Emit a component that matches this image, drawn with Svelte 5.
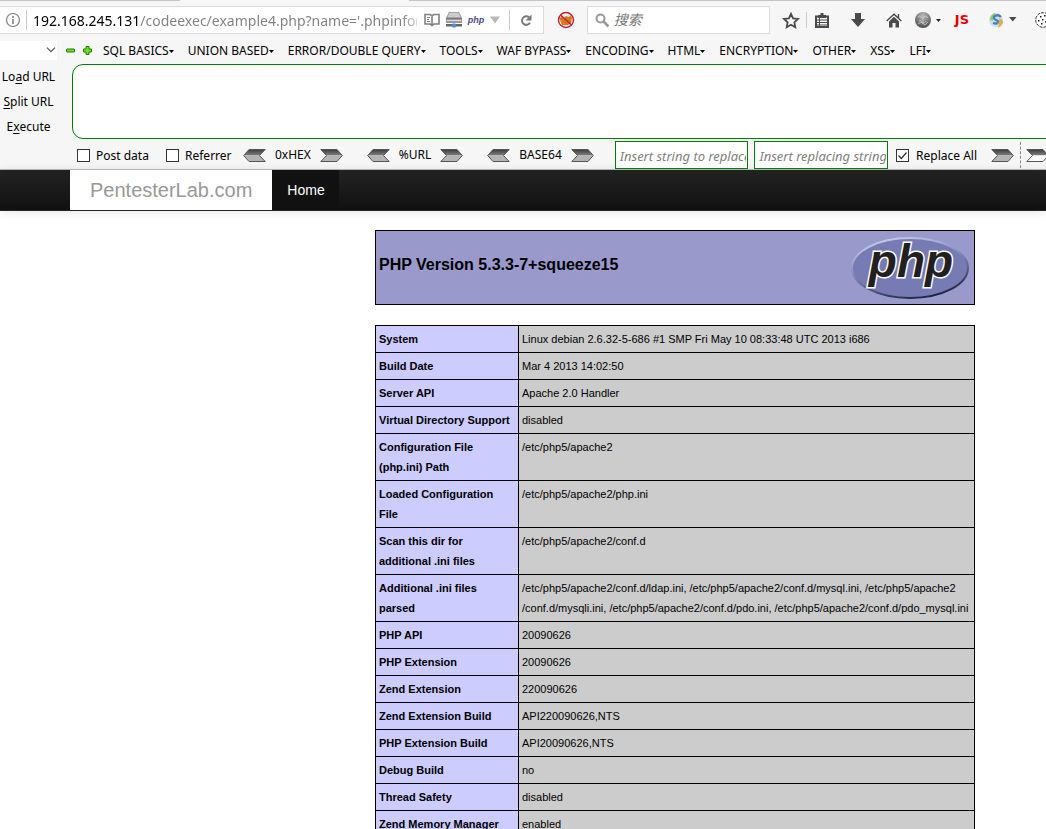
<script>
  const menus = ['SQL BASICS', 'UNION BASED', 'ERROR/DOUBLE QUERY', 'TOOLS', 'WAF BYPASS', 'ENCODING', 'HTML', 'ENCRYPTION', 'OTHER', 'XSS', 'LFI'];
  const encoders = ['0xHEX', '%URL', 'BASE64'];
  const rows = [
    ['System', ['Linux debian 2.6.32-5-686 #1 SMP Fri May 10 08:33:48 UTC 2013 i686']],
    ['Build Date', ['Mar 4 2013 14:02:50']],
    ['Server API', ['Apache 2.0 Handler']],
    ['Virtual Directory Support', ['disabled']],
    ['Configuration File (php.ini) Path', ['/etc/php5/apache2']],
    ['Loaded Configuration File', ['/etc/php5/apache2/php.ini']],
    ['Scan this dir for additional .ini files', ['/etc/php5/apache2/conf.d']],
    ['Additional .ini files parsed', [
      '/etc/php5/apache2/conf.d/ldap.ini, /etc/php5/apache2/conf.d/mysql.ini, /etc/php5/apache2',
      '/conf.d/mysqli.ini, /etc/php5/apache2/conf.d/pdo.ini, /etc/php5/apache2/conf.d/pdo_mysql.ini'
    ]],
    ['PHP API', ['20090626']],
    ['PHP Extension', ['20090626']],
    ['Zend Extension', ['220090626']],
    ['Zend Extension Build', ['API220090626,NTS']],
    ['PHP Extension Build', ['API20090626,NTS']],
    ['Debug Build', ['no']],
    ['Thread Safety', ['disabled']],
    ['Zend Memory Manager', ['enabled']]
  ];
</script>

{#snippet arrow(dir, hollow)}
  <svg class="arrow" class:left={dir === 'left'} width="23" height="13" viewBox="0 0 23 13" aria-hidden="true">
    <path d="M.8 .5H17L22.300 6.500H6.500z" fill="url(#steel)" />
    <path d="M6.500 6.500H22.300L17 12.500H.8z" fill={hollow ? '#fff' : '#b4b4b4'} />
    <path d="M.8 .5H17L22.300 6.500 17 12.500H.8L6.500 6.500z" fill="none" stroke="#555" />
  </svg>
{/snippet}

<svg class="defs" width="0" height="0" aria-hidden="true">
  <defs>
    <linearGradient id="steel" x1="0" y1="0" x2="0" y2="1"><stop offset="0" stop-color="#3c3c3c" /><stop offset="1" stop-color="#808080" /></linearGradient>
  </defs>
</svg>

<header class="browser">
  <div class="tabs"><i></i><b></b></div>
  <div class="toolbar">
    <div class="address">
      <button class="info" aria-label="Site information">
        <svg width="16" height="16" viewBox="0 0 16 16"><circle cx="8" cy="8" r="6.500" fill="none" stroke="#808080" stroke-width="1.200" /><path d="M7.200 4h1.600v2H7.200zM7.200 7h1.600v5H7.200z" fill="#808080" /></svg>
      </button>
      <input class="url" aria-label="Address" value="192.168.245.131/codeexec/example4.php?name='.phpinfo().'" />
      <div class="page-actions">
        <button aria-label="Reader view"><svg width="16" height="14" viewBox="0 0 16 14"><path d="M1 1.500h5l2 1.200 2-1.200h5v9.500h-5L8 12.500 6 11H1zM8 3v9" fill="none" stroke="#808080" stroke-width="1.600" /><path d="M3 4.500h3M3 6.500h2M3 8.500h3" stroke="#808080" /></svg></button>
        <button aria-label="Server"><svg width="16" height="16" viewBox="0 0 16 16"><path d="M3 0h10l3 6v5H0V6z" fill="#999" /><path d="M3.500.8h9l2 4.500h-13z" fill="#ccc" /><path d="M0 6h16v1H0z" fill="#777" /><path d="M1 8h14v1H1z" fill="#ddd" /><path d="M0 12h16v2.500H0z" fill="#666" /><rect x="6" y="11.500" width="4" height="4" rx="1" fill="#4d8ce0" /></svg></button>
        <button class="php-badge">php</button>
        <button aria-label="History"><svg width="10" height="8" viewBox="0 0 10 8"><path d="M0 .5h10L5 7.500z" fill="#b8b8b8" /></svg></button>
      </div>
      <button class="reload" aria-label="Reload"><svg width="13" height="13" viewBox="0 0 13 13"><path d="M9 3.200A4.300 4.300 0 1 0 10 8.800" fill="none" stroke="#7b7b7b" stroke-width="2" /><path d="M11.500 .5v6h-6z" fill="#7b7b7b" /></svg></button>
    </div>
    <button class="blocker" aria-label="Blocker"><svg width="18" height="18" viewBox="0 0 18 18"><path d="M3 9q-1-3 2-3l2 1 2-2 3 1 2-2 1 3-1 5-3 2H5z" fill="#d97a18" /><circle cx="9" cy="9" r="7.500" fill="none" stroke="#c81e2b" stroke-width="1.400" /><path d="M3.500 4l11 10" stroke="#c81e2b" stroke-width="1.500" /></svg></button>
    <label class="search">
      <svg width="15" height="15" viewBox="0 0 15 15"><circle cx="5.500" cy="5.500" r="4" fill="none" stroke="#999" stroke-width="2" /><path d="M8.500 8.500l5 5" stroke="#999" stroke-width="2.500" /></svg>
      <input aria-label="Search" placeholder="搜索" />
    </label>
    <div class="actions">
      <button aria-label="Bookmark"><svg width="18" height="17" viewBox="0 0 18 17"><path d="M9 1.800l2.100 4.500 4.900.6-3.600 3.400.9 4.900L9 12.800l-4.300 2.400.9-4.900L2 6.900l4.900-.6z" fill="none" stroke="#4a4a4a" stroke-width="1.800" /></svg></button>
      <span class="rule"></span>
      <button aria-label="Bookmarks list"><svg width="14" height="15" viewBox="0 0 14 15"><path d="M1 3.500h12v10.500H1z" fill="#f6f6f6" stroke="#4a4a4a" stroke-width="2" /><path d="M3 2h8v3H3zM5.500 0h3v3h-3z" fill="#4a4a4a" /><path d="M2 7h10M2 9.500h10M2 12h10M4.500 5v8" stroke="#4a4a4a" /></svg></button>
      <button class="download" aria-label="Downloads"><svg width="14" height="14" viewBox="0 0 14 14"><path d="M4 0h6v6h4l-7 8-7-8h4z" fill="#4a4a4a" /></svg></button>
      <button class="home" aria-label="Home"><svg width="16" height="15" viewBox="0 0 16 15"><path d="M.6 8L8 1.200 15.400 8M12.500 1v4" fill="none" stroke="#4a4a4a" stroke-width="1.400" /><path d="M3 8.500l5-4.700 5 4.700v6H9.500V10h-3v4.500H3z" fill="#4a4a4a" /></svg></button>
      <button class="globe" aria-label="Proxy">
        <svg width="26" height="16" viewBox="0 0 26 16"><defs><radialGradient id="ball" cx=".5" cy=".25" r=".75"><stop offset="0" stop-color="#bbb" /><stop offset="1" stop-color="#4c4c4c" /></radialGradient></defs><circle cx="8" cy="8" r="8" fill="url(#ball)" /><path d="M3 5q2-2 3 0t3 0 4 1M4 9q2-2 3 1t4-1M8 5v7M3 12l3-2 4 3 3-3" fill="none" stroke="#ccc" stroke-width=".8" /><path d="M21 7h5l-2.500 3z" fill="#222" /></svg>
      </button>
      <button class="js">JS</button>
      <button class="sync" aria-label="Proxy switch">
        <svg width="30" height="16" viewBox="0 0 30 16"><circle cx="7" cy="8" r="7" fill="#c5e3fa" /><path d="M1 8q0-5 5-7v3Q3 5 4 9z" fill="#8cd43c" /><path d="M12 5Q9 2 6 4t1 4 2 3-5 0" fill="none" stroke="#4a7fbe" stroke-width="2.300" /><path d="M10 6q4 1 4 5l-2 3-3 2 1-4-2-1 3-1z" fill="#e3ae3d" /><path d="M20 5h7.500L23.800 9.500z" fill="#4a4a4a" /></svg>
      </button>
      <button class="cookie" aria-label="Cookies"><svg width="16" height="16" viewBox="0 0 16 16"><circle cx="8" cy="8" r="7.300" fill="#fff" stroke="#333" stroke-dasharray="3 1" /><path d="M5 4h1.500v1.500H5zM9 3h1.500v1.500H9zM3 8h1.500v1.500H3zM7 7h1.500v1.500H7zM6 11h1.500v1.500H6zM10 9h1.500v1.500H10z" fill="#222" /></svg></button>
    </div>
  </div>

  <nav class="menus" aria-label="Payload menus">
    <select aria-label="Preset"><option></option></select>
    <button aria-label="Remove"><svg width="9" height="9" viewBox="0 0 9 9"><rect x=".5" y="3" width="8" height="3" rx=".5" fill="#6ee01c" stroke="#1d7d10" /></svg></button>
    <button aria-label="Add"><svg width="9" height="9" viewBox="0 0 9 9"><path d="M3 .5h3V3h2.500v3H6v2.500H3V6H.5V3H3z" fill="#6ee01c" stroke="#1d7d10" /></svg></button>
    <div class="menu-list">
      {#each menus as name}
        <button>{name}<svg width="5" height="3" viewBox="0 0 5 3" aria-hidden="true"><path d="M0 0h5L2.500 3z" fill="#000" /></svg></button>
      {/each}
    </div>
  </nav>

  <div class="hackbar">
    <div class="commands">
      <button>Lo<u>a</u>d URL</button>
      <button><u>S</u>plit URL</button>
      <button>E<u>x</u>ecute</button>
    </div>
    <textarea aria-label="Request URL"></textarea>
  </div>

  <div class="options">
    <label class="check post"><input type="checkbox" /><span>Post data</span></label>
    <label class="check referrer"><input type="checkbox" /><span>Referrer</span></label>
    {#each encoders as name}
      <div class="encoder">
        <button aria-label="Decode {name}">{@render arrow('left', false)}</button>
        <span>{name}</span>
        <button aria-label="Encode {name}">{@render arrow('right', false)}</button>
      </div>
    {/each}
    <div class="replace">
      <input type="text" aria-label="String to replace" placeholder="Insert string to replace" />
      <input type="text" aria-label="Replacing string" placeholder="Insert replacing string" />
    </div>
    <label class="check all"><input type="checkbox" checked /><span>Replace All</span></label>
    <button class="run" aria-label="Replace">{@render arrow('right', false)}</button>
    <button class="next" aria-label="More">{@render arrow('right', true)}</button>
  </div>
</header>

<nav class="site">
  <a class="brand" href="#top">PentesterLab.com</a>
  <a class="current" href="#home">Home</a>
</nav>

<main>
  <div class="title">
    <h1>PHP Version 5.3.3-7+squeeze15</h1>
    <svg width="120" height="64" viewBox="0 0 120 64" role="img" aria-label="PHP logo">
      <defs><linearGradient id="rim" x1=".3" y1="0" x2=".7" y2="1"><stop offset="0" stop-color="#c4cbe8" /><stop offset=".45" stop-color="#8288bb" /><stop offset="1" stop-color="#1e1c38" /></linearGradient></defs>
      <ellipse cx="59" cy="32" rx="58" ry="30" fill="#777bb3" stroke="url(#rim)" stroke-width="2" />
      <text x="60" y="41" text-anchor="middle">php</text>
    </svg>
  </div>
  <table>
    <tbody>
      {#each rows as [name, parts]}
        <tr><th scope="row">{name}</th><td>{#each parts as part, i}{#if i}<wbr />{/if}{part}{/each}</td></tr>
      {/each}
    </tbody>
  </table>
</main>

<style>
  :global(body) { margin: 0; background: #fff; overflow-x: hidden; }
  :global(#app) { height: 100vh; overflow: hidden; }
  button { border: 0; padding: 0; margin: 0; background: none; color: inherit; font: inherit; display: flex; align-items: center; flex: none; white-space: nowrap; }
  input, textarea, select { box-sizing: border-box; font: inherit; margin: 0; outline: 0; }
  svg { display: block; flex: none; }
  .defs { position: absolute; }

  .browser { background: #f6f6f6; font: 12px/18px "Noto Sans", "Noto Sans CJK SC", sans-serif; color: #000; overflow: hidden; border-bottom: 1px solid #bbb; }
  .tabs { display: flex; gap: 229px; height: 6px; }
  .tabs i, .tabs b { height: 1px; background: #c4c4c4; }
  .tabs i { width: 180px; }
  .tabs b { flex: 1; }
  .toolbar { display: flex; align-items: center; height: 28px; margin-right: -5px; }
  .address, .search { display: flex; align-items: center; box-sizing: border-box; height: 28px; background: #fff; border: 1px solid #dcdcdc; }
  .address { flex: 1; min-width: 0; border-left: 0; }
  .info { width: 27px; height: 20px; padding-left: 5px; box-sizing: border-box; border-right: 1px solid #ccc; }
  .url { flex: 1; min-width: 0; border: 0; padding: 0 0 0 6px; font-family: "Noto Sans", sans-serif; font-size: 14px; height: 24px; color: transparent; background: linear-gradient(90deg, #000 112px, #808080 112px, #808080 calc(100% - 16px), #d0d0d0) text; -webkit-background-clip: text; }
  .page-actions { display: flex; align-items: center; gap: 6px; padding: 0 9px 0 7px; }
  .php-badge { width: 16px; font: italic bold 9px/16px "Liberation Sans", sans-serif; color: #4c4c86; }
  .reload { height: 20px; padding: 0 10px; border-left: 1px solid #ccc; }
  .blocker { margin: 0 12px 0 13px; }
  .search { width: 183px; flex: none; padding: 0 7px; gap: 4px; }
  .search input { width: 100%; flex: 1; min-width: 0; border: 0; padding: 0; background: none; font-size: 14px; }
  .search input::placeholder { color: #777; font-style: italic; }
  .actions { display: flex; align-items: center; padding-left: 12px; }
  .rule { width: 1px; height: 16px; background: #ccc; margin: 0 8px 0 6px; }
  .download { margin-left: 22px; }
  .home { margin-left: 21px; }
  .globe { margin-left: 13px; }
  .js { margin-left: 14px; font: bold 13px/16px "DejaVu Sans", sans-serif; color: #e80000; }
  .sync { margin-left: 20px; }
  .cookie { margin-left: 16px; }

  .menus { display: flex; align-items: center; box-sizing: border-box; height: 30px; padding-top: 2px; }
  .menus > select { width: 57px; height: 19px; border: 0; border-radius: 0; appearance: none; background: #fff url("data:image/svg+xml,%3Csvg xmlns='http://www.w3.org/2000/svg' width='10' height='6'%3E%3Cpath d='M1 .7l4 4 4-4' fill='none' stroke='%23555' stroke-width='1.200'/%3E%3C/svg%3E") no-repeat right 1px center; margin-right: 9px; }
  .menus > button { margin-right: 8px; }
  .menu-list { display: flex; gap: 14px; padding: 2px 0 0 3px; }

  .hackbar { display: flex; gap: 15px; height: 75px; margin-right: -12px; }
  .commands { display: flex; flex-direction: column; align-items: center; justify-content: space-around; width: 57px; }
  .commands button { height: 20px; }
  u { text-underline-offset: 2px; }
  textarea { flex: 1; border: 1px solid #008000; border-radius: 11px; background: #fff; resize: none; padding: 6px; height: 75px; }

  .options { display: flex; align-items: center; box-sizing: border-box; height: 30px; padding: 2px 0 0 77px; margin-right: -3px; }
  .check { display: flex; align-items: center; gap: 6px; white-space: nowrap; flex: none; }
  .check span { padding-top: 2px; }
  .check input { appearance: none; width: 13px; height: 13px; background: #fff; border: 1px solid #333; }
  .check input:checked { background: #fff url("data:image/svg+xml,%3Csvg xmlns='http://www.w3.org/2000/svg' width='11' height='11'%3E%3Cpath d='M1.500 5.500l2.800 3L9.500 2.500' fill='none' stroke='%23333' stroke-width='1.300'/%3E%3C/svg%3E") center; }
  .post { width: 89px; }
  .referrer { width: 77px; }
  .encoder { display: flex; align-items: center; gap: 9px; margin-right: 24px; }
  .left { transform: scaleX(-1); }
  .replace { display: flex; gap: 6px; flex: 1; min-width: 0; margin-left: -3px; }
  .replace input { flex: 1; min-width: 0; height: 28px; border: 1px solid #008000; padding: 2px 1px 0 4px; background: #fff; font-size: 13px; }
  .replace input::placeholder { color: #808080; font-style: italic; }
  .all { margin: 0 14px 0 8px; gap: 7px; }
  .next { margin-left: 6px; padding-left: 5px; height: 26px; border-left: 1px dashed #888; }

  .site { display: flex; height: 40px; padding-left: 70px; border-bottom: 1px solid #252525; background: linear-gradient(#222, #111); box-shadow: 0 1px 10px rgba(0, 0, 0, .1); font-family: "Liberation Sans", sans-serif; }
  .site a { text-decoration: none; line-height: 40px; }
  .brand { background: #fff; color: #999; padding: 0 20px; font-size: 20px; }
  .current { background: #111; color: #fff; padding: 0 14px 0 15px; font-size: 14px; }

  main { max-width: 600px; margin: 19px 71px 0 auto; font: 11px/20px "Liberation Sans", Arial, sans-serif; color: #000; }
  .title { display: flex; justify-content: space-between; align-items: center; box-sizing: border-box; height: 75px; border: 1px solid #000; background: #99c; padding: 0 3px; }
  .title h1 { margin: 0 0 6px; font-size: 16px; line-height: 20px; }
  .title text { font: italic bold 46px "Liberation Sans", sans-serif; fill: #231f20; stroke: #fff; stroke-width: 3px; paint-order: stroke; }
  table { width: 100%; margin-top: 20px; border-collapse: collapse; }
  th, td { border: 1px solid #000; padding: 3px; text-align: left; vertical-align: top; }
  th { width: 136px; background: #ccf; }
  td { background: #ccc; }
</style>
